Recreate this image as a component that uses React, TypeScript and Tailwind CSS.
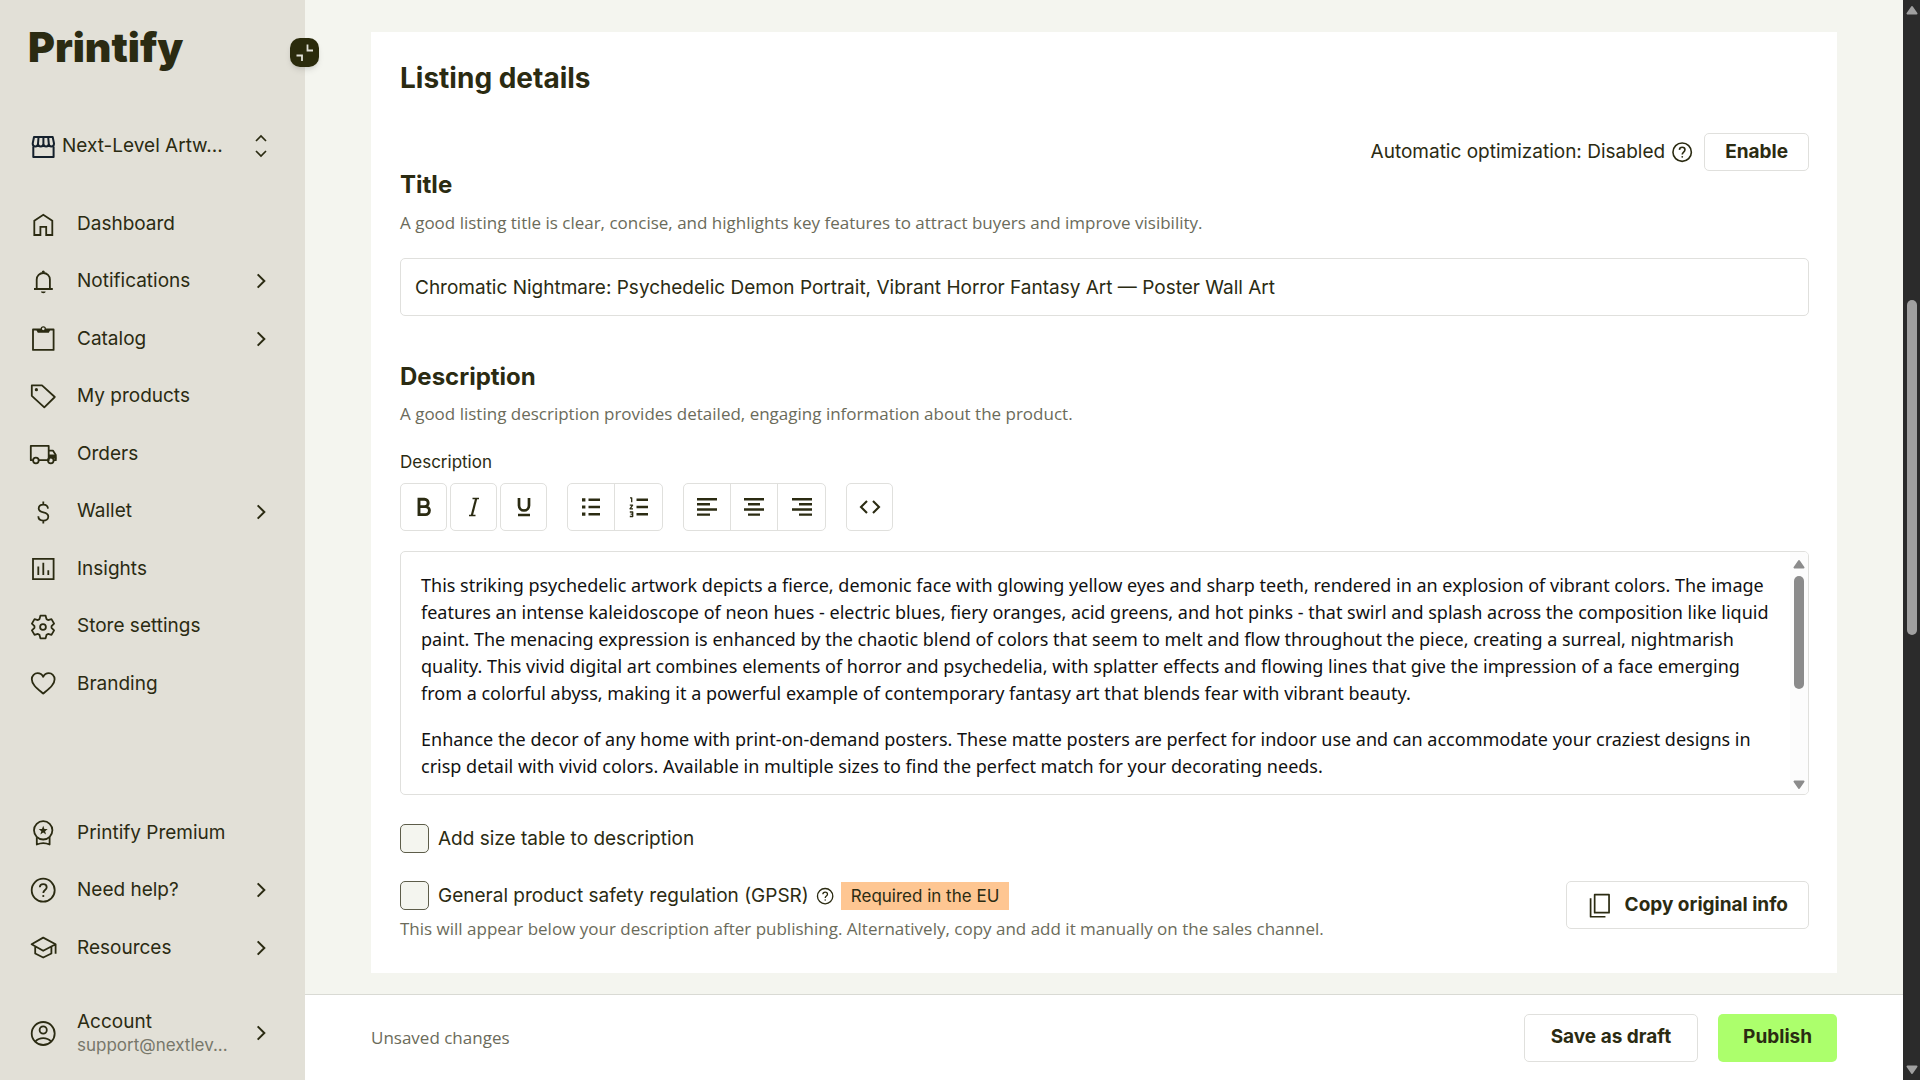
import type { ReactNode } from 'react';

const gearPath = (() => {
  const points: string[] = [];
  for (let i = 0; i < 6; i += 1) {
    const base = i * 60 - 90;
    for (const [offset, radius] of [[-24, 8.6], [-13, 11.6], [13, 11.6], [24, 8.6]]) {
      const a = ((base + offset) * Math.PI) / 180;
      points.push(`${(15 + radius * Math.cos(a)).toFixed(2)} ${(15 + radius * Math.sin(a)).toFixed(2)}`);
    }
  }
  return `M${points.join('L')}Z`;
})();

function Icon({ children, className = 'size-[30px]', box = 30, stroke = 1.8 }: { children: ReactNode; className?: string; box?: number; stroke?: number }) {
  return (
    <svg aria-hidden="true" viewBox={`0 0 ${box} ${box}`} className={`shrink-0 ${className}`} fill="none" stroke="currentColor" strokeWidth={stroke} strokeLinejoin="round">
      {children}
    </svg>
  );
}

const icons: Record<string, ReactNode> = {
  home: <path d="M6.3 26V11.8L15.3 5.8l9 6V26h-6.1v-8.2h-5.8V26z" strokeLinejoin="miter" />,
  bell: (
    <>
      <path d="M6 23h18.8M8.7 23v-9.4a6.6 6.6 0 0 1 13.2 0V23" />
      <path d="M13.7 6.6a1.6 2.2 0 1 1 3.2 0zM12.9 25.4h4.8a2.4 1.8 0 0 1-4.8 0z" fill="currentColor" stroke="none" />
    </>
  ),
  clipboard: (
    <>
      <path d="M5 5.5h20.6v20.4H5z" />
      <path d="M7.8 5h15l-2 3.8h-11z" fill="currentColor" stroke="none" />
      <circle cx="15.3" cy="4.8" r="2" className="fill-[#e2e0d7]" stroke="currentColor" strokeWidth="1.3" />
    </>
  ),
  tag: (
    <>
      <path d="M3.8 4.4H14L26.8 16 16.3 26.4 3.8 14.8z" />
      <circle cx="8.4" cy="8.7" r="1.6" fill="currentColor" stroke="none" />
    </>
  ),
  truck: (
    <>
      <path d="M4.8 21.2H2.8V6.8h17.9v14.4H11M20.7 11.6h4.2l2.9 4.4v5.2h-2" />
      <path d="M20.7 15.6h7.1l.6 4.2h-3l-2.6-1.2-2.1 1.2z" fill="currentColor" stroke="none" />
      <circle cx="7.9" cy="21.5" r="2.8" />
      <circle cx="22.8" cy="21.5" r="2.8" />
    </>
  ),
  dollar: (
    <path d="M15.3 4.6v3M15.3 23.6v3M20 11.6c-.2-2.5-2-4-4.7-4s-4.6 1.5-4.6 3.8c0 2.4 2 3.2 4.7 3.9 2.9.7 4.9 1.7 4.9 4.2s-2.2 4.1-5 4.1-4.9-1.6-5-4.3" />
  ),
  chart: <path d="M5 4.8h20.6v20.4H5zM10.3 12.5v8.5M15.3 8.7V21M20.3 16.2V21" strokeLinejoin="miter" />,
  gear: (
    <>
      <path d={gearPath} />
      <circle cx="15" cy="15" r="2.9" />
    </>
  ),
  heart: <path d="M15.2 24.6C9 19.3 3.8 15.5 3.8 10.3 3.8 6.6 6.6 4.2 9.600 4.200c2.400 0 4.500 1.400 5.600 3.600 1.100-2.200 3.200-3.600 5.600-3.600 3 0 5.800 2.400 5.800 6.100 0 5.200-5.200 9-11.400 14.300z" />,
  badge: (
    <>
      <circle cx="15.2" cy="12.3" r="9.2" />
      <path d="M8.8 19.2v7.3c4.2-1.9 8.6-1.9 12.8 0v-7.300" />
      <path d="m15.2 7.8 1.2 3.100 3.300.2-2.600 2.100.9 3.200-2.800-1.800-2.800 1.800.9-3.200-2.600-2.100 3.300-.2z" fill="currentColor" stroke="none" />
    </>
  ),
  help: (
    <>
      <circle cx="15.2" cy="15.2" r="11.5" />
      <path d="M11.8 12.3c.1-2 1.500-3.200 3.400-3.200 2 0 3.500 1.200 3.500 3.100 0 2.900-3.400 2.800-3.400 5.800" />
      <circle cx="15.3" cy="21" r="1.1" fill="currentColor" stroke="none" />
    </>
  ),
  grad: <path d="m15.2 4.600 12.400 6.600-12.400 6.600L3.600 11.200zM7.200 13.300v7.200l8 4 8.200-4v-7.200M27.600 11.200v9.600" />,
  account: (
    <>
      <circle cx="15.2" cy="15.5" r="11.5" />
      <circle cx="15.2" cy="12" r="3.6" />
      <path d="M7.200 23.600c4.400-4.600 11.600-4.600 16 0" />
    </>
  ),
  store: (
    <>
      <path d="M5.300 15.500V26h20.300V15.500" strokeWidth="2" />
      <path d="M6 6h18.700l1.300 6.500c0 4-5 4-5.200.3 0 3.700-5.300 3.700-5.400 0 0 3.700-5.300 3.700-5.400 0-.2 3.700-5.300 3.700-5.300-.3zM10.500 6.500 10 12.800M15.400 6.500v6.300M20.200 6.500l.6 6.300" strokeWidth="2" />
    </>
  ),
};

function Chevron() {
  return (
    <Icon box={12} className="size-4" stroke={1.5}>
      <path d="m3.500 1 5 5-5 5" strokeLinejoin="miter" />
    </Icon>
  );
}

function NavItem({ icon, label, more }: { icon: string; label: string; more?: boolean }) {
  return (
    <a href="#" className="flex items-center pr-9 pl-7 text-[19px]">
      <Icon>{icons[icon]}</Icon>
      <span className="ml-[19px] grow">{label}</span>
      {more && <Chevron />}
    </a>
  );
}

function Sidebar() {
  return (
    <aside className="relative flex h-full w-[305px] shrink-0 flex-col bg-[#e2e0d7]">
      <div className="px-7 pt-6">
        <a href="#" className="text-[41px] leading-[46px] font-black">Printify</a>
      </div>
      <button type="button" aria-label="Collapse sidebar" className="absolute top-[38px] -right-[14px] z-10 grid size-[29px] place-items-center rounded-[10px] bg-[#2b2b0c] text-[#e2e0d7] shadow-md">
        <Icon box={29} className="size-[29px]" stroke={1.8}>
          <path d="M17.500 6.500v6H23M6.500 17.500H12v5.500" strokeLinejoin="miter" />
        </Icon>
      </button>
      <button type="button" className="mt-[54px] flex h-11 items-center pr-9 pl-7 text-left text-[19px]">
        <span className="text-[#14202c]"><Icon>{icons.store}</Icon></span>
        <span className="ml-1 whitespace-nowrap">Next-Level Artw...</span>
        <Icon box={24} className="ml-auto -mr-1 size-6" stroke={1.7}>
          <path d="m7 7 5-5 5 5M7 17l5 5 5-5" strokeLinejoin="miter" />
        </Icon>
      </button>
      <nav aria-label="Main" className="mt-[27px] grid h-[518px] auto-rows-fr">
        <NavItem icon="home" label="Dashboard" />
        <NavItem icon="bell" label="Notifications" more />
        <NavItem icon="clipboard" label="Catalog" more />
        <NavItem icon="tag" label="My products" />
        <NavItem icon="truck" label="Orders" />
        <NavItem icon="dollar" label="Wallet" more />
        <NavItem icon="chart" label="Insights" />
        <NavItem icon="gear" label="Store settings" />
        <NavItem icon="heart" label="Branding" />
      </nav>
      <nav aria-label="Support" className="mt-auto grid h-[173px] auto-rows-fr">
        <NavItem icon="badge" label="Printify Premium" />
        <NavItem icon="help" label="Need help?" more />
        <NavItem icon="grad" label="Resources" more />
      </nav>
      <a href="#" className="mt-7 mb-[19px] flex h-14 items-center pr-9 pl-7">
        <Icon>{icons.account}</Icon>
        <span className="ml-[19px] whitespace-nowrap">
          <span className="block text-[19px] leading-6">Account</span>
          <span className="block text-[17px] leading-[22px] text-[#77776a]">support@nextlev...</span>
        </span>
        <span className="ml-auto"><Chevron /></span>
      </a>
    </aside>
  );
}

const box = 'rounded-[5px] border border-[#e0e0dd]';

function Tool({ label, children, framed }: { label: string; children: ReactNode; framed?: boolean }) {
  return (
    <button type="button" aria-label={label} className={`grid w-[47px] place-items-center ${framed ? box : ''}`}>
      <Icon box={24} className="size-6" stroke={2.4}>{children}</Icon>
    </button>
  );
}

function Toolbar() {
  return (
    <div className="mt-[9px] flex h-12 gap-5">
      <div className="flex gap-[3px]">
        <Tool label="Bold" framed><path d="M7 4.200h5.500a3.700 3.700 0 0 1 0 7.400H7zM7 11.600h6.400a4 4 0 0 1 0 8H7z" strokeWidth="2.900" strokeLinejoin="miter" /></Tool>
        <Tool label="Italic" framed><path d="M10.500 3.500h6.500M7 20.500h6.500" strokeWidth="1.300" /><path d="M14.200 3.500 9.800 20.500" strokeWidth="2.200" /></Tool>
        <Tool label="Underline" framed><path d="M7 3v7.500a5 5 0 0 0 10 0V3M6 20h12" strokeWidth="2.700" /></Tool>
      </div>
      <div className={`flex divide-x divide-[#e0e0dd] ${box}`}>
        <Tool label="Bulleted list">
          <path d="M9.500 4.800H21M9.500 12H21M9.500 19.200H21" />
          <path d="M3 4.800h3.400M3 12h3.400M3 19.200h3.400" strokeWidth="3.200" />
        </Tool>
        <Tool label="Numbered list">
          <path d="M9.500 4.800H21M9.500 12H21M9.500 19.200H21" />
          <path d="M3 2.800h1.700v4.400M2.800 10.200h2.800L3 13.800h3M2.800 17h2.900v2.200H3.600M5.700 19v2.500H2.800" strokeWidth="1.300" />
        </Tool>
      </div>
      <div className={`flex divide-x divide-[#e0e0dd] ${box}`}>
        <Tool label="Align left"><path d="M2 4.200h20M2 9.300h13M2 14.500h20M2 19.600h13" /></Tool>
        <Tool label="Align center"><path d="M2 4.200h20M6 9.300h12M2 14.500h20M6 19.600h12" /></Tool>
        <Tool label="Align right"><path d="M2 4.200h20M9 9.300h13M2 14.500h20M9 19.600h13" /></Tool>
      </div>
      <Tool label="Source code" framed><path d="m9 6-6 6 6 6M15 6l6 6-6 6" strokeWidth="2.100" strokeLinejoin="miter" /></Tool>
    </div>
  );
}

function Arrow({ down, className }: { down?: boolean; className: string }) {
  return (
    <svg aria-hidden="true" viewBox="0 0 12 10" className={`h-[10px] w-3 ${className}`} fill="currentColor" stroke="currentColor" strokeWidth="2" strokeLinejoin="round">
      <path d={down ? 'M1.500 1.500h9L6 8z' : 'M1.500 8.500h9L6 2z'} />
    </svg>
  );
}

function Editor() {
  return (
    <div className={`mt-5 flex h-[244px] overflow-hidden ${box}`}>
      <div role="textbox" aria-multiline="true" aria-label="Description" contentEditable suppressContentEditableWarning className="grow space-y-[19px] py-5 pr-3 pl-5 font-['Noto_Sans',sans-serif] text-[18px] leading-[27px] text-[#111]">
        <p>
          This striking psychedelic artwork depicts a fierce, demonic face with glowing yellow eyes and sharp teeth, rendered in an explosion of vibrant colors. The image features an intense kaleidoscope of neon hues - electric blues, fiery oranges, acid greens, and hot pinks - that swirl and splash across the composition like liquid paint. The menacing expression is enhanced by the chaotic blend of colors that seem to melt and flow throughout the piece, creating a surreal, nightmarish quality. This vivid digital art combines elements of horror and psychedelia, with splatter effects and flowing lines that give the impression of a face emerging from a colorful abyss, making it a powerful example of contemporary fantasy art that blends fear with vibrant beauty.
        </p>
        <p>
          Enhance the decor of any home with print-on-demand posters. These matte posters are perfect for indoor use and can accommodate your craziest designs in crisp detail with vivid colors. Available in multiple sizes to find the perfect match for your decorating needs.
        </p>
      </div>
      <div aria-hidden="true" className="flex w-[18px] shrink-0 flex-col items-center bg-[#fcfcfc] pt-[7px] pb-1 text-[#8b8b8b]">
        <Arrow className="" />
        <span className="mt-[7px] h-[113px] w-[10px] rounded-full bg-[#8b8b8b]" />
        <Arrow down className="mt-auto" />
      </div>
    </div>
  );
}

const hint = "font-['Open_Sans',sans-serif] text-[17px] leading-6 text-[#6b6b5a]";
const check = 'size-[29px] shrink-0 appearance-none rounded-[5px] border border-[#5d5d4a] bg-[#f4f5ef]';

function ListingCard() {
  return (
    <section className="bg-white pt-7 pr-7 pb-8 pl-[29px]">
      <h1 className="text-[28px] leading-9 font-bold">Listing details</h1>
      <div className="mt-[37px] flex items-center justify-end text-[19px]">
        <span>Automatic optimization: Disabled</span>
        <button type="button" aria-label="About automatic optimization" className="mr-[10px] ml-[5px]"><Icon className="size-6" stroke={2}>{icons.help}</Icon></button>
        <button type="button" className={`h-[38px] px-5 font-bold ${box}`}>Enable</button>
      </div>
      <h2 className="text-[24px] leading-7 font-bold"><label htmlFor="title">Title</label></h2>
      <p className={`mt-3 ${hint}`}>A good listing title is clear, concise, and highlights key features to attract buyers and improve visibility.</p>
      <input id="title" type="text" defaultValue="Chromatic Nightmare: Psychedelic Demon Portrait, Vibrant Horror Fantasy Art — Poster Wall Art" className={`mt-[23px] h-[58px] w-full px-[14px] text-[19px] ${box}`} />
      <h2 className="mt-[47px] text-[24px] leading-7 font-bold">Description</h2>
      <p className={`mt-[11px] ${hint}`}>A good listing description provides detailed, engaging information about the product.</p>
      <p className="mt-6 text-[17px] leading-6">Description</p>
      <Toolbar />
      <Editor />
      <div className="mt-[29px] flex items-center gap-[9px]">
        <input id="size-table" type="checkbox" className={check} />
        <label htmlFor="size-table" className="text-[19px] leading-7">Add size table to description</label>
      </div>
      <div className="mt-7 flex items-start justify-between">
        <div>
          <div className="flex items-center">
            <input id="gpsr" type="checkbox" className={check} />
            <label htmlFor="gpsr" className="ml-[9px] text-[19px] leading-7">General product safety regulation (GPSR)</label>
            <button type="button" aria-label="About GPSR" className="mx-[6px]"><Icon className="size-[20px]" stroke={2}>{icons.help}</Icon></button>
            <span className="bg-[#fec692] px-[10px] text-[17px] leading-7">Required in the EU</span>
          </div>
          <p className={`mt-[7px] ${hint}`}>This will appear below your description after publishing. Alternatively, copy and add it manually on the sales channel.</p>
        </div>
        <button type="button" className={`flex h-12 items-center gap-[11px] px-5 text-[19px] font-bold ${box}`}>
          <Icon className="size-[27px]" stroke={1.9}>
            <path d="M8.500 3h16v20h-16zM4 7v20.500H20.500" />
          </Icon>
          Copy original info
        </button>
      </div>
    </section>
  );
}

export default function App() {
  return (
    <div className="flex h-screen overflow-hidden bg-[#f4f5ef] font-[Inter,sans-serif] text-[#2b2b12]">
      <Sidebar />
      <div className="flex min-w-0 grow flex-col">
        <main className="grow overflow-hidden px-[66px] pt-8">
          <ListingCard />
        </main>
        <footer className="flex h-[86px] shrink-0 items-center border-t border-[#d9dad4] bg-white px-[66px]">
          <span className={hint}>Unsaved changes</span>
          <button type="button" className={`ml-auto h-12 px-[26px] text-[19px] font-bold ${box}`}>Save as draft</button>
          <button type="button" className="ml-5 h-12 rounded-[5px] bg-[#acff6c] px-[25px] text-[19px] font-bold">Publish</button>
        </footer>
      </div>
      <div aria-hidden="true" className="flex w-[17px] shrink-0 flex-col items-center bg-[#2b2b2b] py-[5px] text-[#a0a0a0]">
        <Arrow className="" />
        <div className="grid w-[10px] grow grid-rows-[285fr_335fr_430fr]">
          <span className="row-start-2 rounded-full bg-[#a0a0a0]" />
        </div>
        <Arrow down className="" />
      </div>
    </div>
  );
}
